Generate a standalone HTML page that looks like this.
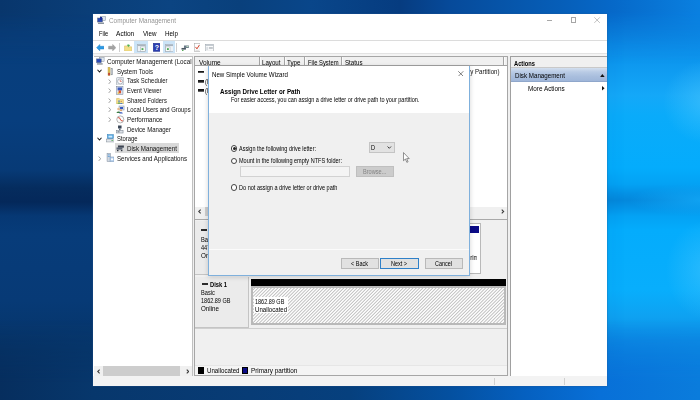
<!DOCTYPE html>
<html lang="en"><head><meta charset="utf-8"><title>Computer Management</title>
<style>
*{box-sizing:border-box;margin:0;padding:0}
html,body{width:700px;height:400px;overflow:hidden}
body{position:relative;font-family:"Liberation Sans",sans-serif;background:#0a4a8c;}
.a{position:absolute}
.t{position:absolute;white-space:nowrap;line-height:10px;height:10px;transform-origin:0 50%;font-family:"Liberation Sans",sans-serif}
#wall{position:absolute;left:0;top:0;width:700px;height:400px;overflow:hidden;
 background:linear-gradient(180deg,#0a80e0 0px,#0b86e3 30px,#0d96ee 60px,#14a8f8 95px,#0aabfa 115px,#04acfc 168px,#04a2f4 184px,#0492e6 193px,#0488dc 200px,#0492e6 207px,#04a2f4 216px,#04acfc 230px,#08aefc 290px,#0ea2f2 316px,#0c8ee6 340px,#0a82e0 368px,#087cdc 400px);}
#wallL{position:absolute;left:0;top:0;width:700px;height:400px;
 background:linear-gradient(180deg,#093c76 0px,#083e7c 30px,#073e7e 120px,#073a76 170px,#052c5e 188px,#04285a 202px,#063874 216px,#073c7a 235px,#073a76 300px,#063468 350px,#052e60 400px);
 -webkit-mask-image:linear-gradient(90deg,#000 0px,#000 200px,rgba(0,0,0,.93) 300px,rgba(0,0,0,.82) 400px,rgba(0,0,0,.62) 460px,rgba(0,0,0,.4) 520px,rgba(0,0,0,.2) 565px,rgba(0,0,0,.05) 598px,rgba(0,0,0,0) 625px);
 mask-image:linear-gradient(90deg,#000 0px,#000 200px,rgba(0,0,0,.93) 300px,rgba(0,0,0,.82) 400px,rgba(0,0,0,.62) 460px,rgba(0,0,0,.4) 520px,rgba(0,0,0,.2) 565px,rgba(0,0,0,.05) 598px,rgba(0,0,0,0) 625px);}
#wallT{position:absolute;left:0;top:0;width:700px;height:90px;
 background:linear-gradient(90deg,#08366c 0px,#0a3e78 90px,#0b4482 170px,#09407c 240px,#09468a 310px,#063c80 400px,#064a9a 450px,#0654a8 500px,#065eb8 560px,#0668c8 610px,#0874d4 655px,#0a80e0 700px);
 -webkit-mask-image:linear-gradient(180deg,#000 0px,#000 12px,rgba(0,0,0,.5) 28px,rgba(0,0,0,.18) 45px,rgba(0,0,0,0) 64px);
 mask-image:linear-gradient(180deg,#000 0px,#000 12px,rgba(0,0,0,.5) 28px,rgba(0,0,0,.18) 45px,rgba(0,0,0,0) 64px);}
#wallB{position:absolute;left:0;top:320px;width:700px;height:80px;
 background:linear-gradient(90deg,#062e5e 0px,#07376c 93px,#083c76 250px,#06407e 350px,#0450a0 450px,#0560c0 525px,#0870d8 600px,#0a7cdc 700px);
 -webkit-mask-image:linear-gradient(180deg,rgba(0,0,0,0) 0px,rgba(0,0,0,.5) 30px,#000 64px,#000 80px);
 mask-image:linear-gradient(180deg,rgba(0,0,0,0) 0px,rgba(0,0,0,.5) 30px,#000 64px,#000 80px);}
#glow1{position:absolute;left:620px;top:40px;width:80px;height:120px;background:radial-gradient(ellipse 45px 42px at 88px 62px,rgba(90,205,255,.48),rgba(90,205,255,0))}
#glow2{position:absolute;left:620px;top:215px;width:80px;height:120px;background:radial-gradient(ellipse 42px 50px at 88px 55px,rgba(90,205,255,.42),rgba(90,205,255,0))}
#glow3{position:absolute;left:600px;top:180px;width:100px;height:40px;background:radial-gradient(ellipse 75px 16px at 104px 20px,rgba(20,172,250,.75),rgba(20,172,250,0))}

</style></head><body>
<div id="wall"><div id="wallL"></div><div id="wallT"></div><div id="wallB"></div><div id="glow1"></div><div id="glow2"></div><div id="glow3"></div></div>
<!-- main window -->
<div class="a" id="win" style="left:93px;top:14px;width:514px;height:372px;background:#fff;box-shadow:0 0 0 .5px rgba(40,90,150,.45), 0 1px 4px rgba(0,0,0,.07)"></div>

<!-- title bar icon -->
<svg class="a" style="left:96.5px;top:16px" width="9" height="9" viewBox="0 0 18 18">
  <rect x="7" y="1" width="10" height="8" fill="#dfe6ee" stroke="#7d8a99" stroke-width="1"/>
  <rect x="1" y="4" width="10" height="8" fill="#2a49b8" stroke="#5c6b7d" stroke-width="1"/>
  <rect x="2" y="13" width="12" height="3" fill="#8b949e"/>
  <rect x="6" y="2" width="4" height="6" fill="#1b2f9c"/>
</svg>
<!-- window controls -->
<div class="a" style="left:547px;top:19.8px;width:5.4px;height:.7px;background:#a8a8a8"></div>
<div class="a" style="left:571px;top:17px;width:5.4px;height:5.6px;border:.6px solid #a6a6a6"></div>
<svg class="a" style="left:594.4px;top:16.8px" width="6.2" height="6.2" viewBox="0 0 10 10"><path d="M0.5 0.5L9.5 9.5M9.5 0.5L0.5 9.5" stroke="#9c9c9c" stroke-width="1" fill="none"/></svg>

<!-- menu / toolbar lines -->
<div class="a" style="left:93px;top:40.2px;width:514px;height:.8px;background:#dcdcdc"></div>
<div class="a" style="left:93px;top:52.8px;width:514px;height:3.4px;background:#f4f4f4"></div>
<div class="a" style="left:93px;top:52.6px;width:514px;height:.7px;background:#e3e3e3"></div>

<!-- toolbar icons -->
<div id="toolbar">
  <!-- back arrow -->
  <svg class="a" style="left:95.6px;top:43.5px" width="8.5" height="7.3" viewBox="0 0 18 16"><path d="M8 1L1 8l7 7v-4h9V5H8z" fill="#2b9be6" stroke="#1777c4" stroke-width="1"/></svg>
  <!-- forward arrow -->
  <svg class="a" style="left:107.7px;top:43.5px" width="8.5" height="7.3" viewBox="0 0 18 16"><path d="M10 1l7 7-7 7v-4H1V5h9z" fill="#a3a3a3" stroke="#8b8b8b" stroke-width="1"/></svg>
  <div class="a" style="left:119.3px;top:42.5px;width:.8px;height:9.5px;background:#cfcfcf"></div>
  <!-- folder up -->
  <svg class="a" style="left:124px;top:43.6px" width="8.2" height="7.6" viewBox="0 0 17 16"><path d="M1 4h6l1.5 2H16v9H1z" fill="#f3e08a" stroke="#d2b450" stroke-width="1"/><path d="M7 1l4 0 0 1.5 2 0-3.5 4L6 2.5h1z" fill="#4fb04b"/></svg>
  <!-- highlighted window icon -->
  <div class="a" style="left:134.2px;top:41px;width:13.8px;height:11.8px;background:#cce4f7"></div>
  <svg class="a" style="left:136.6px;top:43.8px" width="9" height="7.8" viewBox="0 0 18 16"><rect x=".5" y=".5" width="17" height="15" fill="#eef2f6" stroke="#94a0ac"/><rect x="1" y="1" width="16" height="3.2" fill="#a9b4bf"/><rect x="6.5" y="6" width="10" height="9" fill="#fff" stroke="#9aa4ae"/><rect x="9" y="8.5" width="4" height="4" fill="#4daa57"/></svg>
  <!-- help -->
  <svg class="a" style="left:152.8px;top:43.2px" width="7.6" height="8.6" viewBox="0 0 15 17"><rect x=".5" y=".5" width="14" height="16" fill="#2c3fb0" stroke="#1b2a8a"/><text x="7.5" y="13.5" font-family="Liberation Sans, sans-serif" font-weight="700" font-size="14" text-anchor="middle" fill="#fff">?</text></svg>
  <div class="a" style="left:163.2px;top:41px;width:11.4px;height:11.6px;background:#cce4f7"></div>
  <svg class="a" style="left:164.6px;top:43.8px" width="8.6" height="7.8" viewBox="0 0 18 16"><rect x=".5" y=".5" width="17" height="15" fill="#eef2f6" stroke="#94a0ac"/><rect x="1" y="1" width="16" height="3.2" fill="#a9b4bf"/><rect x="1.5" y="6" width="9" height="9" fill="#fff" stroke="#9aa4ae"/><rect x="4" y="8.5" width="4" height="4" fill="#4daa57"/></svg>
  <div class="a" style="left:176.2px;top:42.5px;width:.8px;height:9.5px;background:#cfcfcf"></div>
  <!-- connect icon -->
  <svg class="a" style="left:181px;top:44.6px" width="8.4" height="6.4" viewBox="0 0 17 13"><rect x="6" y="1" width="10" height="5" fill="#6a7a88"/><rect x="1" y="6" width="9" height="3.4" fill="#4a5662"/><rect x="2" y="10" width="3" height="2.4" fill="#58a85a"/><rect x="11" y="2" width="4" height="2" fill="#bfe0c0"/></svg>
  <!-- checklist -->
  <svg class="a" style="left:194px;top:43px" width="6.4" height="8.8" viewBox="0 0 13 18"><rect x=".5" y=".5" width="12" height="17" fill="#fff" stroke="#9a9a9a"/><path d="M3 8l3 4 5-8" stroke="#d0432b" stroke-width="2" fill="none"/><rect x="3" y="14" width="7" height="1.4" fill="#c8c8c8"/></svg>
  <!-- properties window -->
  <svg class="a" style="left:205px;top:43.8px" width="8.8" height="7.4" viewBox="0 0 18 15"><rect x=".5" y=".5" width="17" height="14" fill="#fff" stroke="#8e979f"/><rect x="1" y="1" width="16" height="2.6" fill="#b8c0c8"/><rect x="2.5" y="5.5" width="4" height="7" fill="#d9dee3"/><rect x="8" y="6" width="8" height="1.3" fill="#9aa2aa"/><rect x="8" y="9" width="8" height="1.3" fill="#9aa2aa"/></svg>
</div>

<!-- LEFT TREE PANE -->
<div class="a" style="left:94px;top:56.2px;width:98.8px;height:319.8px;background:#fff;border:.8px solid #c0c0c0;border-left:0"></div>
<!-- selection -->
<div class="a" style="left:114.6px;top:143.4px;width:64px;height:9.4px;background:#d9d9d9"></div>
<!-- tree chevrons -->
<svg class="a" style="left:96.6px;top:69.4px" width="5" height="4" viewBox="0 0 10 8"><path d="M1 1.5l4 4.5 4-4.5" stroke="#1e1e1e" stroke-width="2.2" fill="none"/></svg>
<svg class="a" style="left:96.6px;top:136.6px" width="5" height="4" viewBox="0 0 10 8"><path d="M1 1.5l4 4.5 4-4.5" stroke="#1e1e1e" stroke-width="2.2" fill="none"/></svg>
<svg class="a" style="left:107.8px;top:78.5px" width="3.4" height="5.4" viewBox="0 0 7 11"><path d="M1.5 1l4 4.5-4 4.5" stroke="#8a8a8a" stroke-width="1.7" fill="none"/></svg>
<svg class="a" style="left:107.8px;top:88.1px" width="3.4" height="5.4" viewBox="0 0 7 11"><path d="M1.5 1l4 4.5-4 4.5" stroke="#8a8a8a" stroke-width="1.7" fill="none"/></svg>
<svg class="a" style="left:107.8px;top:97.8px" width="3.4" height="5.4" viewBox="0 0 7 11"><path d="M1.5 1l4 4.5-4 4.5" stroke="#8a8a8a" stroke-width="1.7" fill="none"/></svg>
<svg class="a" style="left:107.8px;top:107.4px" width="3.4" height="5.4" viewBox="0 0 7 11"><path d="M1.5 1l4 4.5-4 4.5" stroke="#8a8a8a" stroke-width="1.7" fill="none"/></svg>
<svg class="a" style="left:107.8px;top:117.1px" width="3.4" height="5.4" viewBox="0 0 7 11"><path d="M1.5 1l4 4.5-4 4.5" stroke="#8a8a8a" stroke-width="1.7" fill="none"/></svg>
<svg class="a" style="left:97.6px;top:155.6px" width="3.4" height="5.4" viewBox="0 0 7 11"><path d="M1.5 1l4 4.5-4 4.5" stroke="#8a8a8a" stroke-width="1.7" fill="none"/></svg>
<!-- tree icons -->
<div id="treeicons">
  <!-- root: computer mgmt -->
  <svg class="a" style="left:96px;top:57.4px" width="8.6" height="8.6" viewBox="0 0 18 18"><rect x="7" y="1" width="10" height="8" fill="#dfe6ee" stroke="#7d8a99"/><rect x="1" y="4" width="10" height="8" fill="#2a49b8" stroke="#5c6b7d"/><rect x="2" y="13" width="12" height="3" fill="#8b949e"/></svg>
  <!-- system tools -->
  <svg class="a" style="left:107px;top:67px" width="7" height="8.8" viewBox="0 0 14 18"><rect x="2" y="1" width="4" height="16" fill="#e3c458" stroke="#b59a3a"/><rect x="8" y="3" width="3.4" height="13" fill="#c9ced4" stroke="#8c949c"/><rect x="2" y="12" width="4" height="5" fill="#c24a36"/></svg>
  <!-- task scheduler (clock) -->
  <svg class="a" style="left:116px;top:76.6px" width="8.4" height="8.8" viewBox="0 0 17 18"><rect x="1" y="1" width="15" height="16" rx="2" fill="#e7ebef" stroke="#8a949e"/><circle cx="8.5" cy="9" r="5.2" fill="#fff" stroke="#6d7c8c"/><path d="M8.5 5.5V9h3" stroke="#c0392b" stroke-width="1.3" fill="none"/></svg>
  <!-- event viewer -->
  <svg class="a" style="left:116.4px;top:86.2px" width="7.6" height="8.8" viewBox="0 0 15 18"><rect x="1" y="1" width="13" height="16" fill="#dfe5ef" stroke="#6a7890"/><rect x="3" y="3" width="9" height="6" fill="#3c5bbd"/><rect x="5" y="9" width="5" height="6" fill="#d9532c"/><rect x="3" y="13" width="3" height="3" fill="#e9c341"/></svg>
  <!-- shared folders -->
  <svg class="a" style="left:116.2px;top:96.6px" width="8" height="7.8" viewBox="0 0 16 16"><path d="M1 3h5.500l1.500 2H15v10H1z" fill="#f4e08c" stroke="#cfae48"/><circle cx="6" cy="8.500" r="1.700" fill="#4f7fc8"/><path d="M3 14c0-3.600 6-3.600 6 0z" fill="#4f9a58"/><circle cx="10.500" cy="9" r="1.500" fill="#c98a5a"/><path d="M8 14.500c0-3.200 5.500-3.200 5.500 0z" fill="#4f7fc8"/></svg>
  <!-- local users -->
  <svg class="a" style="left:116px;top:105.4px" width="8.6" height="9" viewBox="0 0 17 18"><rect x="6" y="2" width="10" height="8" fill="#dfe6ee" stroke="#7d8a99"/><rect x="8" y="4" width="6" height="4" fill="#3558c0"/><circle cx="5" cy="8" r="2.6" fill="#e9b98a"/><path d="M1 16c0-4 8-4 8 0z" fill="#3a7d44"/><circle cx="10" cy="10.5" r="2.2" fill="#d9a070"/><path d="M6.5 17c0-3.6 7-3.6 7 0z" fill="#3558c0"/></svg>
  <!-- performance -->
  <svg class="a" style="left:116px;top:115px" width="8.6" height="8.8" viewBox="0 0 17 18"><circle cx="8.5" cy="9" r="7.2" fill="#fdfdfd" stroke="#8d8d8d" stroke-width="1.3"/><path d="M3.6 6.4c2-2.6 4-1 5 2s3 4.600 5 2.400" stroke="#d8432f" stroke-width="1.5" fill="none"/><path d="M4.200 4.800l8.400 8.600" stroke="#c63a2a" stroke-width="1.2"/></svg>
  <!-- device manager -->
  <svg class="a" style="left:116.4px;top:124.6px" width="7.6" height="9" viewBox="0 0 15 18"><rect x="4" y="1" width="7" height="6" fill="#3a4656"/><rect x="6" y="7" width="3" height="4" fill="#5d6b7b"/><rect x="1" y="11" width="13" height="5" fill="#dfe4ea" stroke="#6d7886"/><rect x="3" y="13" width="4" height="1.4" fill="#3a4656"/></svg>
  <!-- storage -->
  <svg class="a" style="left:105.6px;top:134.4px" width="8.8" height="8.6" viewBox="0 0 18 17"><rect x="3" y="1" width="12" height="8" fill="#4aa3df" stroke="#2b78b4"/><rect x="5" y="3" width="8" height="4" fill="#cfeaff"/><rect x="1" y="10" width="16" height="6" fill="#e1e6eb" stroke="#7d8894"/><rect x="11" y="12" width="4" height="1.6" fill="#57a85a"/></svg>
  <!-- disk management -->
  <svg class="a" style="left:116.2px;top:145.4px" width="8.4" height="6.4" viewBox="0 0 17 13"><rect x="4" y="1" width="12" height="4.4" fill="#3a4250"/><rect x="1" y="5" width="12" height="4.4" fill="#596373"/><rect x="2" y="10" width="3" height="2.6" fill="#2f3640"/><rect x="10" y="10" width="3" height="2.6" fill="#2f3640"/></svg>
  <!-- services and applications -->
  <svg class="a" style="left:105.8px;top:153.4px" width="8.6" height="9" viewBox="0 0 17 18"><rect x="2" y="1" width="7" height="16" fill="#d0d8e2" stroke="#7f8c9b"/><rect x="3.5" y="3" width="4" height="1.6" fill="#5b9bd8"/><rect x="3.5" y="6" width="4" height="1.6" fill="#5b9bd8"/><rect x="8" y="8" width="8" height="9" fill="#bcd4ee" stroke="#6c8db5"/><rect x="10" y="11" width="4" height="3" fill="#fff"/></svg>
</div>
<!-- left pane h-scrollbar -->
<div class="a" style="left:94px;top:366.2px;width:98px;height:9.6px;background:#f0f0f0"></div>
<div class="a" style="left:103px;top:366.4px;width:76.6px;height:9.2px;background:#cdcdcd"></div>
<svg class="a" style="left:97px;top:368.6px" width="3.4" height="5" viewBox="0 0 7 10"><path d="M5.5 1L1.5 5l4 4" stroke="#3a3a3a" stroke-width="2.2" fill="none"/></svg>
<svg class="a" style="left:185.6px;top:368.6px" width="3.4" height="5" viewBox="0 0 7 10"><path d="M1.5 1l4 4-4 4" stroke="#3a3a3a" stroke-width="2.2" fill="none"/></svg>

<!-- splitter areas -->
<div class="a" style="left:192.8px;top:56.2px;width:1.8px;height:319.8px;background:#f0f0f0"></div>
<div class="a" style="left:507.6px;top:56.2px;width:2.8px;height:319.8px;background:#f0f0f0"></div>

<!-- MIDDLE PANE -->
<div class="a" id="mid" style="left:194.4px;top:56.2px;width:313.2px;height:319.8px;background:#f0f0f0;border:.8px solid #a6a6a6;overflow:hidden"></div>
<!-- list view -->
<div class="a" style="left:195.2px;top:57px;width:311.6px;height:150.2px;background:#fff"></div>
<div class="a" style="left:195.2px;top:57px;width:311.6px;height:9px;background:#f0f0f0;border-bottom:.8px solid #a2a2a2"></div>
<div class="a" style="left:258.6px;top:57.2px;width:.8px;height:8.2px;background:#a4a4a4;box-shadow:.7px 0 0 #fff"></div>
<div class="a" style="left:283.5px;top:57.2px;width:.8px;height:8.2px;background:#a4a4a4;box-shadow:.7px 0 0 #fff"></div>
<div class="a" style="left:303.5px;top:57.2px;width:.8px;height:8.2px;background:#a4a4a4;box-shadow:.7px 0 0 #fff"></div>
<div class="a" style="left:341px;top:57.2px;width:.8px;height:8.2px;background:#a4a4a4;box-shadow:.7px 0 0 #fff"></div>
<div class="a" style="left:503.4px;top:57.2px;width:.8px;height:8.2px;background:#a4a4a4;box-shadow:.7px 0 0 #fff"></div>
<!-- volume row icons -->
<div class="a" style="left:197.6px;top:70.6px;width:6.8px;height:2.6px;background:linear-gradient(180deg,#111 0,#222 55%,#8a8a8a 100%)"></div>
<div class="a" style="left:197.6px;top:80.0px;width:6.8px;height:2.6px;background:linear-gradient(180deg,#111 0,#222 55%,#8a8a8a 100%)"></div>
<div class="a" style="left:197.6px;top:89.2px;width:6.8px;height:2.6px;background:linear-gradient(180deg,#111 0,#222 55%,#8a8a8a 100%)"></div>
<span class="t" style="left:209.4px;top:67.1px;font-size:6.7px;color:#111;transform:scaleX(.9)">(C:)</span>
<span class="t" style="left:205.4px;top:76.5px;font-size:6.7px;color:#111;transform:scaleX(.9)">(Disk 0 partition 2)</span>
<span class="t" style="left:205.4px;top:85.7px;font-size:6.7px;color:#111;transform:scaleX(.9)">(Disk 0 partition 1)</span>
<span class="t" style="left:344px;top:67.1px;font-size:6.7px;color:#111;transform:scaleX(.92)">Healthy (Boot, Page File, Crash Dump, Primary Partition)</span>
<!-- list h-scrollbar -->
<div class="a" style="left:195.2px;top:207.1px;width:311.6px;height:9.6px;background:#f0f0f0"></div>
<div class="a" style="left:204.6px;top:207.3px;width:200px;height:9.2px;background:#cdcdcd"></div>
<svg class="a" style="left:198.2px;top:209.3px" width="3.4" height="5" viewBox="0 0 7 10"><path d="M5.5 1L1.5 5l4 4" stroke="#3a3a3a" stroke-width="2.2" fill="none"/></svg>
<svg class="a" style="left:501.4px;top:209.3px" width="3.4" height="5" viewBox="0 0 7 10"><path d="M1.5 1l4 4-4 4" stroke="#3a3a3a" stroke-width="2.2" fill="none"/></svg>
<!-- splitter between list and graphical view -->
<div class="a" style="left:195.2px;top:216.7px;width:311.6px;height:3px;background:#f0f0f0;border-bottom:.8px solid #a9a9a9"></div>

<!-- Disk 0 row (mostly hidden by dialog) -->
<div class="a" style="left:195.2px;top:221.4px;width:54px;height:53.6px;background:#ebebeb;border-right:.8px solid #c4c4c4;border-bottom:.8px solid #c4c4c4"></div>
<div class="a" style="left:201.2px;top:229.4px;width:6px;height:1.5px;background:#2b2b2b"></div>
<span class="t" style="left:210px;top:225.4px;font-size:6.7px;font-weight:700;transform:scaleX(.86)">Disk 0</span>
<span class="t" style="left:200.8px;top:234.5px;font-size:6.7px;transform:scaleX(.86)">Basic</span>
<span class="t" style="left:200.8px;top:243.1px;font-size:6.7px;transform:scaleX(.83)">447.01 GB</span>
<span class="t" style="left:200.8px;top:251.3px;font-size:6.7px;transform:scaleX(.94)">Online</span>
<div class="a" style="left:251px;top:223.4px;width:230.4px;height:51px;background:#fff;border:1.8px solid #b9b9b9"></div>
<div class="a" style="left:251px;top:226px;width:228.4px;height:7.2px;background:#0a0a86"></div>
<div class="a" style="left:255px;top:233px;width:221.9px;height:40px;overflow:hidden"><span class="t" style="left:103.4px;top:19.5px;font-size:6.7px;transform:scaleX(.92)">Healthy (Boot, Page File, Crash Dump, Primary Partition)</span></div>

<!-- Disk 1 row -->
<div class="a" style="left:195.2px;top:276.8px;width:54px;height:51.4px;background:#ebebeb;border-right:.8px solid #c4c4c4;border-bottom:.8px solid #c4c4c4"></div>
<div class="a" style="left:202px;top:283.4px;width:6px;height:1.5px;background:#2b2b2b"></div>
<div class="a" style="left:250.8px;top:278.8px;width:255px;height:7.2px;background:#000"></div>
<div class="a" id="hatch" style="left:250.8px;top:286px;width:255px;height:38.8px;border:2px solid #b9b9b9;
 background:repeating-linear-gradient(135deg,#fcfcfc 0,#fcfcfc .45px,#c6c6c6 1.15px,#c6c6c6 1.45px,#fcfcfc 2.15px,#fcfcfc 2.33px)"></div>
<div class="a" style="left:254px;top:297px;width:34px;height:16.4px;background:#fff"></div>
<div class="a" style="left:195.2px;top:328.2px;width:311.6px;height:.7px;background:#cfcfcf"></div>

<!-- legend -->
<div class="a" style="left:195.2px;top:364.8px;width:311.6px;height:10.6px;background:#f4f4f4;border-top:.6px solid #e6e6e6"></div>
<div class="a" style="left:198px;top:366.6px;width:6px;height:7px;background:#000"></div>
<div class="a" style="left:242.4px;top:366.6px;width:5.8px;height:7px;background:#0a0a86;border:.5px solid #000"></div>

<!-- ACTIONS PANE -->
<div class="a" style="left:510.4px;top:56.2px;width:96.2px;height:319.8px;background:#fff;border:.8px solid #a0a0a0;border-right:0;border-bottom:0"></div>
<div class="a" style="left:511.2px;top:57px;width:95.4px;height:10.6px;background:#f0f0f0;border-bottom:.7px solid #c9c9c9"></div>
<div class="a" style="left:511.2px;top:67.6px;width:95.4px;height:14px;background:linear-gradient(180deg,#d3dfef 0,#b9cbe5 30%,#a9bedd 65%,#9fb6d9 100%);border-bottom:.7px solid #8fa7cb"></div>
<svg class="a" style="left:600.2px;top:74.1px" width="4.8" height="3.1" viewBox="0 0 9 6"><path d="M0 6L4.5 0 9 6z" fill="#111"/></svg>
<svg class="a" style="left:602.2px;top:86.2px" width="2.6" height="4.6" viewBox="0 0 5 9"><path d="M0 0l5 4.5L0 9z" fill="#111"/></svg>

<!-- STATUS BAR -->
<div class="a" style="left:93px;top:376.2px;width:514px;height:9.8px;background:#f3f3f3"></div>
<div class="a" style="left:494px;top:378px;width:.7px;height:7px;background:#d0d0d0"></div>
<div class="a" style="left:564px;top:378px;width:.7px;height:7px;background:#d0d0d0"></div>

<!-- DIALOG -->
<div class="a" id="dlg" style="left:207.7px;top:65.5px;width:262.2px;height:210.4px;background:#f0f0f0;border:.9px solid #7fb0dc;box-shadow:0 1px 5px rgba(0,0,0,.17)"></div>
<div class="a" style="left:208.6px;top:66.4px;width:260.4px;height:46.4px;background:#fff"></div>
<svg class="a" style="left:458.2px;top:70.8px" width="5.6" height="5.6" viewBox="0 0 10 10"><path d="M0.5 0.5L9.5 9.5M9.5 0.5L0.5 9.5" stroke="#333" stroke-width="1.1" fill="none"/></svg>
<!-- radios -->
<div class="a" style="left:230.6px;top:145px;width:6.8px;height:6.8px;border-radius:50%;background:#fff;border:.65px solid #444"></div>
<div class="a" style="left:232.5px;top:146.9px;width:3px;height:3px;border-radius:50%;background:#222"></div>
<div class="a" style="left:230.6px;top:157.6px;width:6.8px;height:6.8px;border-radius:50%;background:#fff;border:.65px solid #444"></div>
<div class="a" style="left:230.6px;top:184.2px;width:6.8px;height:6.8px;border-radius:50%;background:#fff;border:.65px solid #444"></div>
<!-- text field (disabled) -->
<div class="a" style="left:240px;top:166px;width:110.4px;height:11.4px;background:#f4f4f4;border:.8px solid #d2d2d2"></div>
<!-- browse -->
<div class="a" style="left:355.6px;top:166.4px;width:38.6px;height:10.8px;background:#cccccc;border:.7px solid #bfbfbf"></div>
<!-- combo -->
<div class="a" style="left:369.2px;top:142.4px;width:25.4px;height:10.2px;background:#e2e2e2;border:.7px solid #c4c4c4"></div>
<svg class="a" style="left:387.4px;top:146.2px" width="4.6" height="3" viewBox="0 0 9 6"><path d="M1 1l3.5 3.6L8 1" stroke="#2e2e2e" stroke-width="1.8" fill="none"/></svg>
<!-- separator -->
<div class="a" style="left:208.6px;top:248.6px;width:260.4px;height:.7px;background:#cfcfcf"></div>
<div class="a" style="left:208.6px;top:249.3px;width:260.4px;height:.7px;background:#fbfbfb"></div>
<!-- buttons -->
<div class="a" style="left:341px;top:257.6px;width:37.6px;height:11.2px;background:#e1e1e1;border:.8px solid #b9b9b9"></div>
<div class="a" style="left:380px;top:257.6px;width:38.6px;height:11.2px;background:#e1e1e1;border:1.3px solid #2f80c8"></div>
<div class="a" style="left:425px;top:257.6px;width:38px;height:11.2px;background:#e1e1e1;border:.8px solid #b9b9b9"></div>
<!-- cursor -->
<svg class="a" style="left:402.9px;top:151.6px" width="7.2" height="11.2" viewBox="0 0 15 23"><path d="M1 1v17l4-3.6 3 7 2.6-1.2-3-6.600H13z" fill="#fff" stroke="#3a3a3a" stroke-width="1.15" stroke-linejoin="round"/></svg>

<div id="texts">
<span class="t" id="t0" style="left:108.50px;top:15.90px;font-size:6.7px;font-weight:400;color:#949494;transform:scaleX(0.9535);">Computer Management</span>
<span class="t" id="t1" style="left:98.75px;top:29.40px;font-size:6.7px;font-weight:400;color:#000;transform:scaleX(0.8580);">File</span>
<span class="t" id="t2" style="left:116.25px;top:29.40px;font-size:6.7px;font-weight:400;color:#000;transform:scaleX(0.9815);">Action</span>
<span class="t" id="t3" style="left:143.00px;top:29.40px;font-size:6.7px;font-weight:400;color:#000;transform:scaleX(0.9322);">View</span>
<span class="t" id="t4" style="left:164.50px;top:29.40px;font-size:6.7px;font-weight:400;color:#000;transform:scaleX(0.9444);">Help</span>
<span class="t" id="t5" style="left:107.00px;top:57.20px;font-size:6.7px;font-weight:400;color:#111;transform:scaleX(0.9366);">Computer Management (Local</span>
<span class="t" id="t6" style="left:117.00px;top:66.84px;font-size:6.7px;font-weight:400;color:#111;transform:scaleX(0.9078);">System Tools</span>
<span class="t" id="t7" style="left:127.00px;top:76.48px;font-size:6.7px;font-weight:400;color:#111;transform:scaleX(0.8877);">Task Scheduler</span>
<span class="t" id="t8" style="left:127.00px;top:86.12px;font-size:6.7px;font-weight:400;color:#111;transform:scaleX(0.8757);">Event Viewer</span>
<span class="t" id="t9" style="left:127.00px;top:95.76px;font-size:6.7px;font-weight:400;color:#111;transform:scaleX(0.8746);">Shared Folders</span>
<span class="t" id="t10" style="left:127.00px;top:105.40px;font-size:6.7px;font-weight:400;color:#111;transform:scaleX(0.8818);">Local Users and Groups</span>
<span class="t" id="t11" style="left:127.00px;top:115.04px;font-size:6.7px;font-weight:400;color:#111;transform:scaleX(0.9270);">Performance</span>
<span class="t" id="t12" style="left:127.00px;top:124.68px;font-size:6.7px;font-weight:400;color:#111;transform:scaleX(0.9034);">Device Manager</span>
<span class="t" id="t13" style="left:117.00px;top:134.32px;font-size:6.7px;font-weight:400;color:#111;transform:scaleX(0.8747);">Storage</span>
<span class="t" id="t14" style="left:127.00px;top:143.96px;font-size:6.7px;font-weight:400;color:#111;transform:scaleX(0.9275);">Disk Management</span>
<span class="t" id="t15" style="left:117.00px;top:153.60px;font-size:6.7px;font-weight:400;color:#111;transform:scaleX(0.9184);">Services and Applications</span>
<span class="t" id="t16" style="left:198.75px;top:57.80px;font-size:6.7px;font-weight:400;color:#000;transform:scaleX(0.9748);">Volume</span>
<span class="t" id="t17" style="left:262.00px;top:57.80px;font-size:6.7px;font-weight:400;color:#000;transform:scaleX(0.9207);">Layout</span>
<span class="t" id="t18" style="left:287.00px;top:57.80px;font-size:6.7px;font-weight:400;color:#000;transform:scaleX(0.9310);">Type</span>
<span class="t" id="t19" style="left:307.50px;top:57.80px;font-size:6.7px;font-weight:400;color:#000;transform:scaleX(0.8730);">File System</span>
<span class="t" id="t20" style="left:345.00px;top:57.80px;font-size:6.7px;font-weight:400;color:#000;transform:scaleX(0.9226);">Status</span>
<span class="t" id="t21" style="left:514.00px;top:58.50px;font-size:6.7px;font-weight:700;color:#000;transform:scaleX(0.8561);">Actions</span>
<span class="t" id="t22" style="left:515.00px;top:70.80px;font-size:6.7px;font-weight:400;color:#000;transform:scaleX(0.9275);">Disk Management</span>
<span class="t" id="t23" style="left:527.70px;top:84.10px;font-size:6.7px;font-weight:400;color:#000;transform:scaleX(0.9520);">More Actions</span>
<span class="t" id="t24" style="left:210.00px;top:279.90px;font-size:6.7px;font-weight:700;color:#000;transform:scaleX(0.8621);">Disk 1</span>
<span class="t" id="t25" style="left:200.80px;top:287.70px;font-size:6.7px;font-weight:400;color:#000;transform:scaleX(0.8436);">Basic</span>
<span class="t" id="t26" style="left:200.80px;top:295.90px;font-size:6.7px;font-weight:400;color:#000;transform:scaleX(0.8235);">1862.89 GB</span>
<span class="t" id="t27" style="left:200.80px;top:304.00px;font-size:6.7px;font-weight:400;color:#000;transform:scaleX(0.9305);">Online</span>
<span class="t" id="t28" style="left:254.70px;top:296.80px;font-size:6.7px;font-weight:400;color:#000;transform:scaleX(0.8207);">1862.89 GB</span>
<span class="t" id="t29" style="left:254.70px;top:304.90px;font-size:6.7px;font-weight:400;color:#000;transform:scaleX(0.9086);">Unallocated</span>
<span class="t" id="t30" style="left:207.00px;top:365.50px;font-size:6.7px;font-weight:400;color:#000;transform:scaleX(0.9199);">Unallocated</span>
<span class="t" id="t31" style="left:250.60px;top:365.50px;font-size:6.7px;font-weight:400;color:#000;transform:scaleX(0.9530);">Primary partition</span>
<span class="t" id="t32" style="left:212.40px;top:69.90px;font-size:6.7px;font-weight:400;color:#000;transform:scaleX(0.9210);">New Simple Volume Wizard</span>
<span class="t" id="t33" style="left:219.60px;top:86.90px;font-size:6.8px;font-weight:700;color:#000;transform:scaleX(0.9174);">Assign Drive Letter or Path</span>
<span class="t" id="t34" style="left:231.00px;top:94.60px;font-size:6.8px;font-weight:400;color:#000;transform:scaleX(0.8109);">For easier access, you can assign a drive letter or drive path to your partition.</span>
<span class="t" id="t35" style="left:239.00px;top:143.80px;font-size:6.8px;font-weight:400;color:#000;transform:scaleX(0.8055);">Assign the following drive letter:</span>
<span class="t" id="t36" style="left:239.00px;top:156.40px;font-size:6.8px;font-weight:400;color:#000;transform:scaleX(0.8138);">Mount in the following empty NTFS folder:</span>
<span class="t" id="t37" style="left:239.00px;top:183.10px;font-size:6.8px;font-weight:400;color:#000;transform:scaleX(0.8164);">Do not assign a drive letter or drive path</span>
<span class="t" id="t38" style="left:371.40px;top:143.00px;font-size:6.8px;font-weight:400;color:#000;transform:scaleX(0.8330);">D</span>
<span class="t" id="t39" style="left:363.00px;top:167.20px;font-size:6.8px;font-weight:400;color:#838383;transform:scaleX(0.8256);">Browse...</span>
<span class="t" id="t40" style="left:351.00px;top:258.90px;font-size:6.8px;font-weight:400;color:#000;transform:scaleX(0.8107);">&lt; Back</span>
<span class="t" id="t41" style="left:391.40px;top:258.90px;font-size:6.8px;font-weight:400;color:#000;transform:scaleX(0.8063);">Next &gt;</span>
<span class="t" id="t42" style="left:435.00px;top:258.90px;font-size:6.8px;font-weight:400;color:#000;transform:scaleX(0.8030);">Cancel</span>
</div>
</body></html>
